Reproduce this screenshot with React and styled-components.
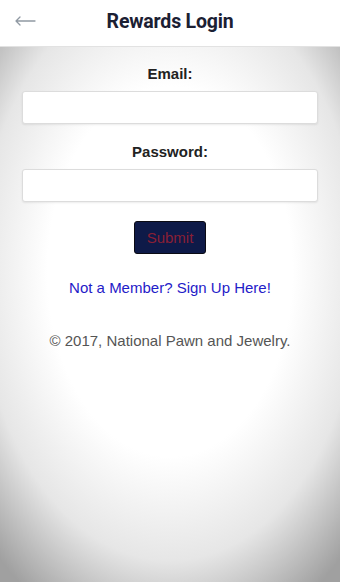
import React from 'react';
import styled, { createGlobalStyle } from 'styled-components';

const GlobalStyle = createGlobalStyle`
  html, body {
    margin: 0;
    padding: 0;
    height: 100%;
  }
  body {
    font-family: 'Liberation Sans', Arial, sans-serif;
    background: #fff;
  }
  #root {
    height: 100%;
  }
`;

const Screen = styled.div`
  display: flex;
  flex-direction: column;
  width: 340px;
  height: 582px;
  overflow: hidden;
`;

const Header = styled.div`
  position: relative;
  display: flex;
  align-items: center;
  justify-content: center;
  height: 46px;
  flex-shrink: 0;
  background: #fff;
  border-bottom: 1px solid #e2e2e2;
`;

const BackButton = styled.button`
  position: absolute;
  left: 14px;
  top: 14px;
  display: flex;
  align-items: center;
  justify-content: center;
  width: 22px;
  height: 14px;
  padding: 0;
  border: none;
  background: transparent;
  cursor: pointer;
`;

const Title = styled.h1`
  margin: 0 0 4px;
  font-family: Roboto, 'Liberation Sans', sans-serif;
  font-weight: 700;
  font-size: 19.5px;
  letter-spacing: -0.2px;
  color: #1b2033;
`;

const Body = styled.div`
  flex: 1;
  display: flex;
  flex-direction: column;
  align-items: center;
  padding: 18px 22px 0;
  background: radial-gradient(
    ellipse 75% 72% at 50% 42%,
    #ffffff 48%,
    #e6e6e6 75%,
    #a0a0a0 100%
  );
`;

const Label = styled.label`
  margin-top: ${({ gap }) => gap}px;
  font-size: 15px;
  font-weight: 700;
  color: #222;
`;

const Input = styled.input`
  box-sizing: border-box;
  width: 100%;
  height: 33px;
  margin-top: 9px;
  border: 1px solid #dcdcdc;
  border-radius: 3px;
  background: #fff;
  box-shadow: 0 1px 2px rgba(0, 0, 0, 0.08);
  outline: none;
`;

const Submit = styled.button`
  margin-top: 19px;
  width: 72px;
  height: 33px;
  border: 1px solid #0b0b14;
  border-radius: 3px;
  background: #0e1a48;
  color: #8a1f35;
  font-family: 'Liberation Sans', Arial, sans-serif;
  font-size: 15px;
  cursor: pointer;
`;

const SignUp = styled.a`
  margin-top: 25px;
  font-size: 15px;
  color: #1f20c8;
  text-decoration: none;
`;

const Copyright = styled.p`
  margin: 36px 0 0;
  font-size: 15px;
  color: #555;
`;

const BackArrow = () => (
  <svg width="22" height="14" viewBox="0 0 22 14" fill="none">
    <path
      d="M21 7H2M6 3L2 7L6 11"
      stroke="#9099a3"
      strokeWidth="1.3"
      strokeLinecap="round"
      strokeLinejoin="round"
    />
  </svg>
);

export default function App() {
  return (
    <>
      <GlobalStyle />
      <Screen>
        <Header>
          <BackButton aria-label="Back">
            <BackArrow />
          </BackButton>
          <Title>Rewards Login</Title>
        </Header>
        <Body>
          <Label gap={0}>Email:</Label>
          <Input type="email" />
          <Label gap={19}>Password:</Label>
          <Input type="password" />
          <Submit>Submit</Submit>
          <SignUp href="#">Not a Member? Sign Up Here!</SignUp>
          <Copyright>© 2017, National Pawn and Jewelry.</Copyright>
        </Body>
      </Screen>
    </>
  );
}
